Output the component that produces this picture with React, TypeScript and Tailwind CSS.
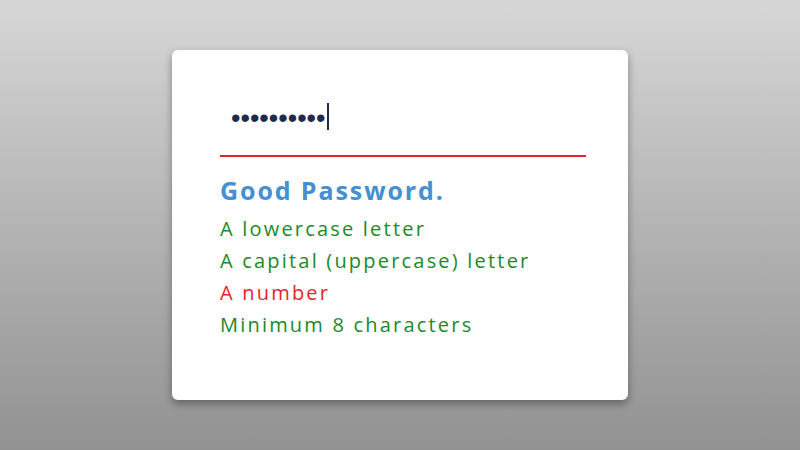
export default function App() {
  const rules = [
    { label: "A lowercase letter", ok: true },
    { label: "A capital (uppercase) letter", ok: true },
    { label: "A number", ok: false },
    { label: "Minimum 8 characters", ok: true },
  ];

  return (
    <div
      className="w-[800px] h-[450px] flex items-center justify-center bg-gradient-to-b from-[#d7d7d7] to-[#929292]"
      style={{ fontFamily: '"Open Sans", "Noto Sans", sans-serif' }}
    >
      <div className="w-[456px] h-[350px] bg-white rounded-[6px] shadow-[0_4px_8px_rgba(0,0,0,0.35)] pl-[48px] pr-[42px] pt-[50px]">
        {/* password field */}
        <div className="h-[57px] border-b-2 border-[#e0202a] flex items-start pl-[11px]">
          <span className="font-['Liberation_Sans',sans-serif] text-[27px] leading-[36px] text-[#1f2b4d]">
            ••••••••••
          </span>
          <span className="ml-[1px] mt-[3px] w-[2px] h-[27px] bg-[#1f2b4d]" />
        </div>

        {/* strength */}
        <div className="pt-[16px]">
          <h2 className="text-[25px] leading-[34px] font-bold text-[#4590d2] tracking-[1.9px]">
            Good Password.
          </h2>
          <ul className="mt-[6px]">
            {rules.map((r) => (
              <li
                key={r.label}
                className={`text-[20px] leading-[32px] tracking-[2.2px] ${
                  r.ok ? "text-[#1a8a2a]" : "text-[#e4252a]"
                }`}
              >
                {r.label}
              </li>
            ))}
          </ul>
        </div>
      </div>
    </div>
  );
}
